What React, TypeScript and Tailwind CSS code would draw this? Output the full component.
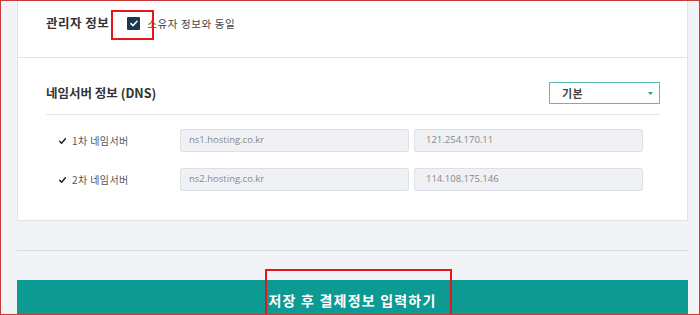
import React from "react";

const KR = { fontFamily: '"Noto Sans CJK KR", "Noto Sans", sans-serif' };
const OS = { fontFamily: '"Open Sans", "Noto Sans CJK KR", sans-serif' };

function SmallCheck() {
  return (
    <svg width="7" height="6" viewBox="0 0 7 6" className="shrink-0">
      <path d="M0.6 3.2 L2.6 5.2 L6.4 0.8" fill="none" stroke="#222" strokeWidth="1.5" strokeLinecap="round" strokeLinejoin="round" />
    </svg>
  );
}

function NsRow({ label, host, ip }: { label: string; host: string; ip: string }) {
  return (
    <div className="flex items-center h-[23px]">
      <div className="w-[134px] flex items-center pl-[13px] gap-[6px] text-[10px] tracking-[0.4px] text-[#555]" style={KR}>
        <SmallCheck />
        <span>{label}</span>
      </div>
      <div className="flex gap-[5px]">
        <div className="w-[229px] h-[23px] bg-[#f0f1f4] border border-[#dde0e5] rounded-[2px] flex items-center pl-[8px] text-[9.5px] text-[#888]" style={OS}>
          {host}
        </div>
        <div className="w-[229px] h-[23px] bg-[#f0f1f4] border border-[#dde0e5] rounded-[2px] flex items-center pl-[11px] text-[9.5px] text-[#888]" style={OS}>
          {ip}
        </div>
      </div>
    </div>
  );
}

export default function App() {
  return (
    <div className="relative w-[700px] h-[315px] overflow-hidden bg-[#f2f3f6] border border-[#c43b3b] pl-[16px] pr-[11px]">
      <div className="bg-white border-x border-b border-[#e1e3e8]">
        <div className="h-[57px] border-b border-[#e1e3e8] pl-[28px] pt-[13px]">
          <div className="flex items-center h-[19px]">
            <span className="text-[12.5px] font-bold tracking-[0.5px] text-[#333]" style={KR}>관리자 정보</span>
            <div className="ml-[18px] w-[13px] h-[13px] bg-[#1b3a50] rounded-[1px] flex items-center justify-center">
              <svg width="8" height="7" viewBox="0 0 8 7">
                <path d="M1 3.6 L3.1 5.6 L7 1.2" fill="none" stroke="#fff" strokeWidth="1.5" strokeLinecap="round" strokeLinejoin="round" />
              </svg>
            </div>
            <span className="ml-[7px] text-[10.5px] tracking-[0.6px] text-[#444]" style={KR}>소유자 정보와 동일</span>
          </div>
        </div>
        <div className="pb-[29px]">
          <div className="ml-[28px] mr-[27px] pt-[24px] pb-[10px] border-b border-[#e4e6ea] flex items-center justify-between">
            <span className="text-[12.5px] font-bold text-[#333]" style={KR}>네임서버 정보 (DNS)</span>
            <div className="w-[111px] h-[22px] border border-[#5cbdb5] flex items-center justify-between pl-[12px] pr-[6px]">
              <span className="text-[11px] font-bold tracking-[0.5px] text-[#444]" style={KR}>기본</span>
              <svg width="5" height="3" viewBox="0 0 5 3">
                <path d="M0 0 L5 0 L2.5 3 Z" fill="#3b8f8a" />
              </svg>
            </div>
          </div>
          <div className="ml-[28px] mt-[14px] flex flex-col gap-[16px]">
            <NsRow label="1차 네임서버" host="ns1.hosting.co.kr" ip="121.254.170.11" />
            <NsRow label="2차 네임서버" host="ns2.hosting.co.kr" ip="114.108.175.146" />
          </div>
        </div>
      </div>
      <div className="mt-[29px] border-t border-[#d8dbe1]" />
      <div className="mt-[29px] h-[40px] bg-[#0c9a93] flex items-center justify-center">
        <span className="text-[14px] font-bold tracking-[1.2px] text-white" style={KR}>저장 후 결제정보 입력하기</span>
      </div>
      <div className="absolute left-[110px] top-[9px] w-[43px] h-[30px] border-2 border-[#e5161c]" />
      <div className="absolute left-[264px] top-[268px] w-[187px] h-[60px] border-2 border-[#e5161c]" />
    </div>
  );
}
